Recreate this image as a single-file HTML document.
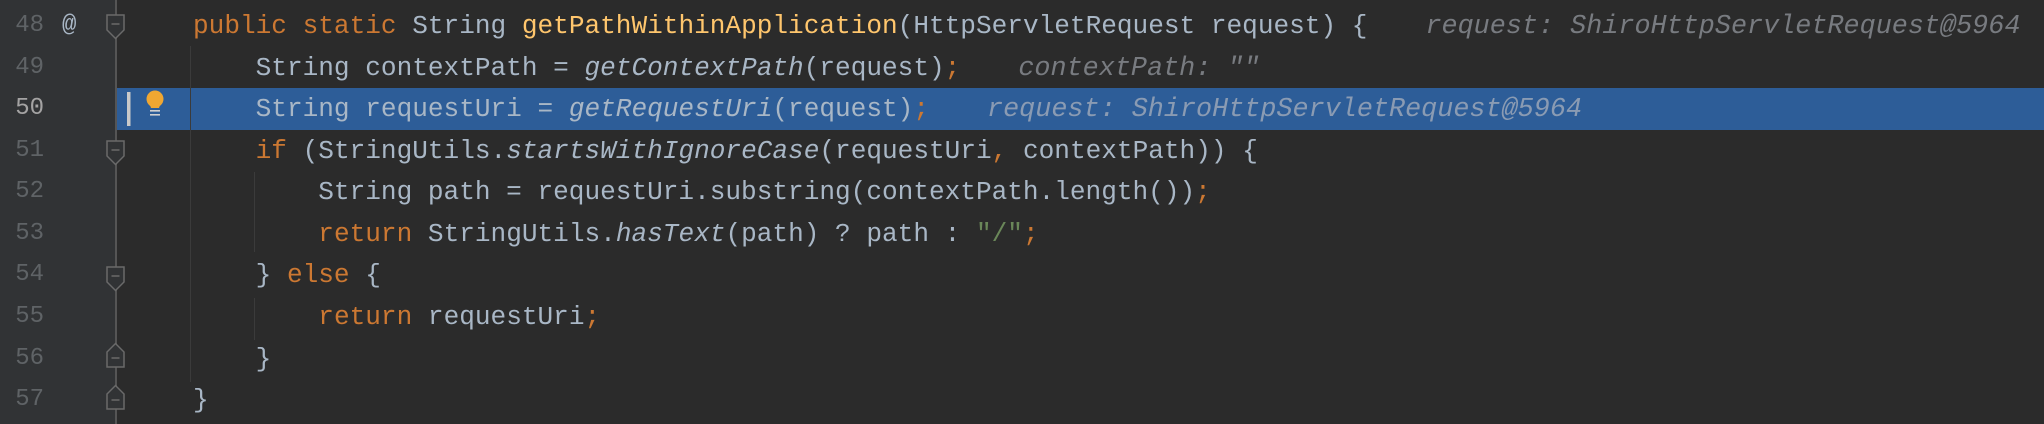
<!DOCTYPE html>
<html><head><meta charset="utf-8"><style>
html,body{margin:0;padding:0;background:#2b2b2b;}
#w{position:relative;width:2044px;height:424px;overflow:hidden;background:#2b2b2b;font-family:"Liberation Mono","DejaVu Sans Mono",monospace;font-size:26.1px;}
.g{position:absolute;left:0;top:0;width:116px;height:424px;background:#313335;}
.ln{position:absolute;left:0;width:44px;text-align:right;color:#5f6366;height:42px;line-height:42px;font-size:24px;}
.c{position:absolute;left:193px;height:42px;line-height:42px;color:#a9b7c6;white-space:pre;}
.k{color:#cc7832}.m{color:#ffc66d}.i{font-style:italic}.h{color:#787b80;font-style:italic;font-size:26.8px;margin-left:58px}.s{color:#6a8759}
.hl{position:absolute;left:116px;top:88px;width:1928px;height:42px;background:#2d5d98;}
.gd{position:absolute;width:1px;background:#3b3b3b;}
</style></head><body><div id="w">
<div class="g"></div>
<div class="hl"></div>
<div style="position:absolute;left:115px;top:0;width:2px;height:424px;background:#555"></div>
<div class="gd" style="left:190px;top:46px;height:336px"></div>
<div class="gd" style="left:254px;top:172px;height:80px"></div>
<div class="gd" style="left:254px;top:298px;height:42px"></div>
<svg style="position:absolute;left:0;top:0" width="200" height="424">
 <g fill="#313335" stroke="#6a6a6a" stroke-width="1.5">
  <path d="M107 15h17v15l-8.5 8.5l-8.5-8.5z"/><path d="M111.5 24h8" />
  <path d="M107 141h17v15l-8.5 8.5l-8.5-8.5z"/><path d="M111.5 150h8"/>
  <path d="M107 267h17v15l-8.5 8.5l-8.5-8.5z"/><path d="M111.5 276h8"/>
  <path d="M107 367h17v-15l-8.5-8.5l-8.5 8.5z"/><path d="M111.5 358h8"/>
  <path d="M107 409h17v-15l-8.5-8.5l-8.5 8.5z"/><path d="M111.5 400h8"/>
 </g>
 <rect x="127" y="92" width="3.5" height="34" fill="#c9c9c9"/>
 <circle cx="155" cy="99" r="8.5" fill="#f0a732"/>
 <path d="M148.5 101h13l-2.5 7h-8z" fill="#f0a732"/>
 <rect x="150" y="110" width="10" height="1.6" fill="#d0d0d0"/>
 <rect x="150" y="114" width="10" height="1.6" fill="#d0d0d0"/>
</svg>
<div style="position:absolute;left:62px;top:5px;height:42px;line-height:42px;color:#a9b7c6;font-size:24px">@</div>
<div class="ln" style="top:5px">48</div>
<div class="ln" style="top:47px">49</div>
<div class="ln" style="top:88px;color:#a4a3a3">50</div>
<div class="ln" style="top:130px">51</div>
<div class="ln" style="top:171px">52</div>
<div class="ln" style="top:213px">53</div>
<div class="ln" style="top:254px">54</div>
<div class="ln" style="top:296px">55</div>
<div class="ln" style="top:338px">56</div>
<div class="ln" style="top:379px">57</div>
<div class="c" style="top:5px"><span class="k">public static </span>String <span class="m">getPathWithinApplication</span>(HttpServletRequest request) {<span class="h">request: ShiroHttpServletRequest@5964</span></div>
<div class="c" style="top:47px">    String contextPath = <span class="i">getContextPath</span>(request)<span class="k">;</span><span class="h">contextPath: ""</span></div>
<div class="c" style="top:88px">    String requestUri = <span class="i">getRequestUri</span>(request)<span class="k">;</span><span class="h" style="color:#8a9bb3">request: ShiroHttpServletRequest@5964</span></div>
<div class="c" style="top:130px">    <span class="k">if </span>(StringUtils.<span class="i">startsWithIgnoreCase</span>(requestUri<span class="k">, </span>contextPath)) {</div>
<div class="c" style="top:171px">        String path = requestUri.substring(contextPath.length())<span class="k">;</span></div>
<div class="c" style="top:213px">        <span class="k">return </span>StringUtils.<span class="i">hasText</span>(path) ? path : <span class="s">"/"</span><span class="k">;</span></div>
<div class="c" style="top:254px">    } <span class="k">else </span>{</div>
<div class="c" style="top:296px">        <span class="k">return </span>requestUri<span class="k">;</span></div>
<div class="c" style="top:338px">    }</div>
<div class="c" style="top:379px">}</div>
</div></body></html>
